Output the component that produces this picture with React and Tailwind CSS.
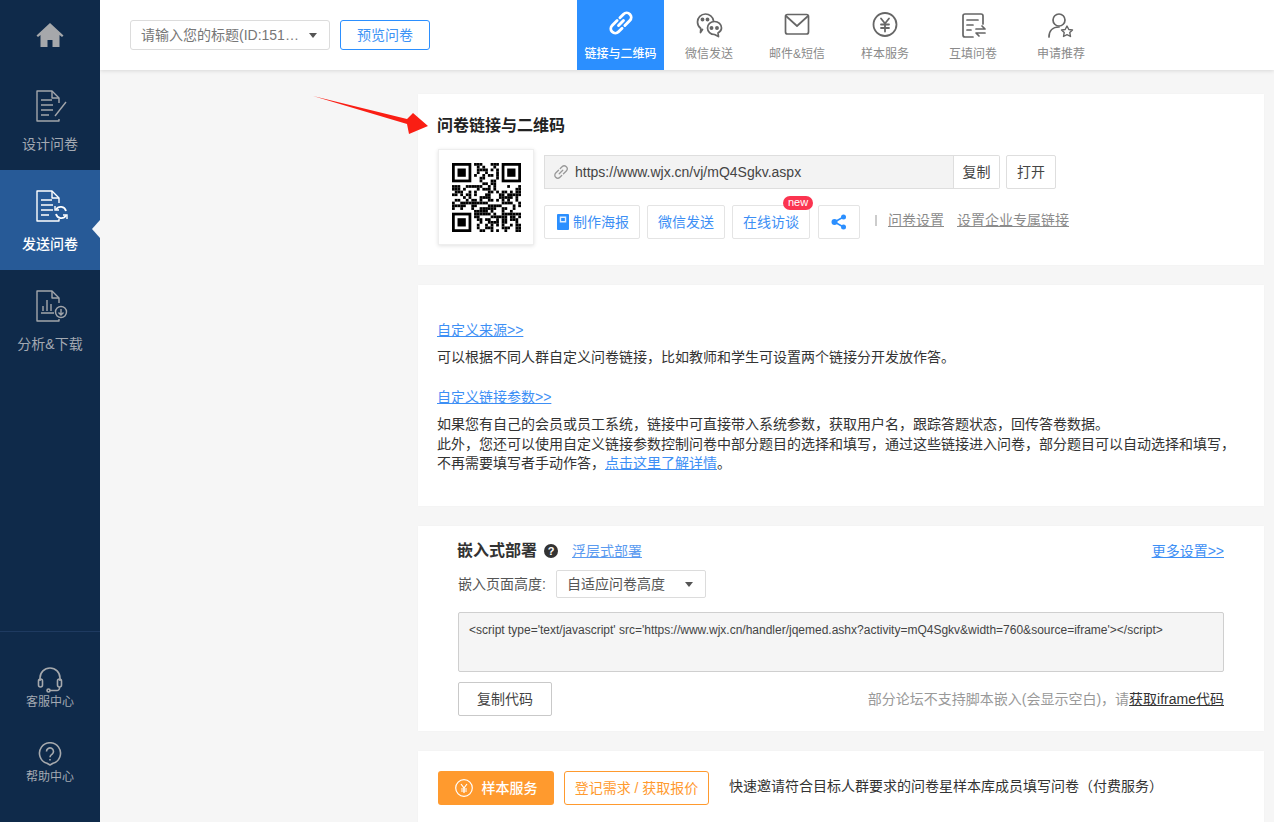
const FONT = "font-['Liberation_Sans','Noto_Sans_CJK_SC',sans-serif]";

// fake qr matrix, fixed seed so it looks the same every run
function qrCells() {
  const n = 25;
  const cells = [];
  let s = 151;
  const finder = (x, y) => x >= 0 && x < 8 && y >= 0 && y < 8;
  for (let y = 0; y < n; y++) {
    for (let x = 0; x < n; x++) {
      if (finder(x, y) || finder(x - n + 8, y) || finder(x, y - n + 8)) continue;
      s = (s * 1103515245 + 12345) & 0x7fffffff;
      if ((s >> 16) % 100 < 52) cells.push([x, y]);
    }
  }
  return cells;
}

function QrCode() {
  const Finder = ({ x, y }) => (
    <g>
      <rect x={x + 0.5} y={y + 0.5} width="6" height="6" fill="none" stroke="#000" strokeWidth="1" />
      <rect x={x + 2} y={y + 2} width="3" height="3" fill="#000" />
    </g>
  );
  return (
    <svg width="69" height="69" viewBox="0 0 25 25">
      {qrCells().map(([x, y]) => (
        <rect key={`${x}-${y}`} x={x} y={y} width="1" height="1" fill="#000" />
      ))}
      <Finder x={0} y={0} />
      <Finder x={18} y={0} />
      <Finder x={0} y={18} />
    </svg>
  );
}

function DocIcon({ color, children }) {
  return (
    <svg width="34" height="34" viewBox="0 0 34 34" fill="none" stroke={color} strokeWidth="1.4">
      <path d="M25 14V9l-7-7H3v30h22v-2" strokeLinejoin="round" />
      <path d="M18 2v7h7" strokeLinejoin="round" />
      {children}
    </svg>
  );
}

function SideItem({ active, icon, label }) {
  return (
    <div className={`relative h-[100px] flex flex-col items-center pt-[19px] ${active ? "bg-[#275a97]" : ""}`}>
      <div className="h-[34px] w-[34px] ml-[1px]">{icon}</div>
      <div className={`mt-[11px] text-[14px] leading-[20px] ${active ? "text-white font-medium" : "text-[#a3a9b2]"}`}>{label}</div>
      {active && (
        <div className="absolute right-0 top-[50px] w-0 h-0 border-y-[9px] border-y-transparent border-r-[8px] border-r-[#f2f5f9]" />
      )}
    </div>
  );
}

function TopTab({ active, icon, label }) {
  return (
    <div className={`h-[70px] flex flex-col items-center pt-[11px] ${active ? "w-[87px] mr-[1px] bg-[#2b8fff] text-white" : "w-[88px] text-[#8a8a8a]"}`}>
      <div className="h-[28px] w-[28px]">{icon}</div>
      <div className={`mt-[7px] text-[12px] leading-[16px] ${active ? "font-medium" : ""}`}>{label}</div>
    </div>
  );
}

const tabStroke = { fill: "none", stroke: "#666", strokeWidth: 1.7, strokeLinecap: "round", strokeLinejoin: "round" };

function BlueBtn({ children, className = "" }) {
  return (
    <div className={`h-[34px] border border-[#e4e4e4] rounded-[2px] flex items-center justify-center text-[14px] text-[#3d8ff5] bg-white ${className}`}>
      {children}
    </div>
  );
}

const cardShadow = "shadow-[0_0_2px_rgba(0,0,0,0.03)]";

export default function App() {
  return (
    <div className={`${FONT} relative flex h-[822px] w-[1274px] overflow-hidden bg-[#f6f6f6] text-[14px] text-[#333]`}>
      {/* SIDEBAR */}
      <aside className="w-[100px] shrink-0 bg-[#0f2a4a] flex flex-col z-20">
        <div className="h-[70px] flex items-center justify-center">
          <svg width="28" height="26" viewBox="0 0 28 26" fill="#a6a8ab">
            <path d="M14 1 0.5 13.5 2 15l2.500-2V25h7v-7h5v7h7V13l2.500 2 1.500-1.500z" />
          </svg>
        </div>
        <SideItem
          label="设计问卷"
          icon={
            <DocIcon color="#a3a6ab">
              <path d="M7 11h11M7 16h12M7 21h12M7 26h8" />
              <path d="M21 27l11-14" />
            </DocIcon>
          }
        />
        <SideItem
          active
          label="发送问卷"
          icon={
            <DocIcon color="#fff">
              <path d="M7 11h11M7 16h12M7 21h12M7 26h8" />
              <path d="M32 22a5.500 5.500 0 0 0-10-1.500M22 25a5.500 5.500 0 0 0 10 1.500" strokeWidth="1.800" />
              <path d="M21 17v4h4M33 30v-4h-4" strokeWidth="1.400" />
            </DocIcon>
          }
        />
        <SideItem
          label="分析&下载"
          icon={
            <DocIcon color="#a3a6ab">
              <path d="M7 24h13M9 22v-5M13 22V11M17 22v-7" />
              <circle cx="27" cy="23" r="5.500" />
              <path d="M27 20v5.500M24.500 23.500l2.500 2.500 2.500-2.500" />
            </DocIcon>
          }
        />
        <div className="mt-auto border-t border-[#1e3a60] h-[191px] flex flex-col items-center pt-[35px] text-[12px] leading-[16px] text-[#a3a9b2]">
          <svg width="26" height="26" viewBox="0 0 26 26" fill="none" stroke="#a6a9ad" strokeWidth="1.600">
            <path d="M3 14v-3a10 10 0 0 1 20 0v3" />
            <rect x="1.500" y="12" width="4" height="8" rx="2" />
            <rect x="20.500" y="12" width="4" height="8" rx="2" />
            <path d="M22.500 20v1a2.500 2.500 0 0 1-2.500 2.500h-7" />
            <circle cx="11.500" cy="23.500" r="1.500" />
          </svg>
          <div className="mt-[1px]">客服中心</div>
          <svg className="mt-[32px]" width="24" height="24" viewBox="0 0 24 24" fill="none" stroke="#a6a9ad" strokeWidth="1.600">
            <path d="M12 23l-3-1.700A10.500 10.500 0 1 1 15 21.300z" strokeLinejoin="round" />
            <path d="M8.500 9.500a3.500 3.500 0 1 1 5.500 2.800c-1.200.9-2 1.400-2 2.900" />
            <path d="M12 17v1.500" />
          </svg>
          <div className="mt-[3px]">帮助中心</div>
        </div>
      </aside>

      <div className="flex-1 flex flex-col min-w-0">
        {/* TOP BAR */}
        <header className="h-[70px] shrink-0 bg-white shadow-[0_1px_4px_rgba(0,0,0,0.12)] flex z-10">
          <div className="w-[477px] flex items-center pl-[30px]">
            <div className="w-[200px] h-[30px] border border-[#dcdcdc] rounded-[3px] flex items-center pl-[10px] pr-[12px] text-[#777]">
              <span className="flex-1 truncate">请输入您的标题(ID:151…</span>
              <span className="w-0 h-0 border-x-[4px] border-x-transparent border-t-[5px] border-t-[#555]" />
            </div>
            <div className="ml-[10px] w-[90px] h-[30px] border border-[#2b8fff] rounded-[3px] flex items-center justify-center text-[#3d93f5]">
              预览问卷
            </div>
          </div>
          <nav className="flex">
            <TopTab
              active
              label="链接与二维码"
              icon={
                <svg width="28" height="28" viewBox="0 0 28 28" fill="none" stroke="#fff" strokeWidth="2.900" strokeLinecap="round">
                  <g transform="rotate(-45 14 12)">
                    <path d="M13 7.500H6a4.500 4.500 0 0 0 0 9h5" />
                    <path d="M15 16.500h7a4.500 4.500 0 0 0 0-9h-5" />
                    <path d="M10.500 12h7" />
                  </g>
                </svg>
              }
            />
            <TopTab
              label="微信发送"
              icon={
                <svg width="28" height="28" viewBox="0 0 28 28" {...tabStroke}>
                  <path d="M7.500 18.500 5.500 21.500l.3-4C3.800 16 2.500 13.800 2.500 11 2.500 6.600 6 3 10.500 3c4 0 7.300 2.800 7.900 6.500" />
                  <path d="M19.500 10.500c-4 0-7 3-7 6.500s3 6.500 7 6.500l4 2-.5-3.500c2.200-1.200 3.500-3 3.500-5 0-3.500-3-6.500-7-6.500z" />
                  <circle cx="7.500" cy="8.500" r="1.100" fill="#666" />
                  <circle cx="12.500" cy="8.500" r="1.100" fill="#666" />
                  <circle cx="16.500" cy="17" r="1.100" fill="#666" />
                  <circle cx="22" cy="17" r="1.100" fill="#666" />
                </svg>
              }
            />
            <TopTab
              label="邮件&短信"
              icon={
                <svg width="28" height="28" viewBox="0 0 28 28" {...tabStroke}>
                  <rect x="2.500" y="3.500" width="23" height="19.500" rx="2" />
                  <path d="M3 5l11 10L25 5" />
                </svg>
              }
            />
            <TopTab
              label="样本服务"
              icon={
                <svg width="28" height="28" viewBox="0 0 28 28" {...tabStroke}>
                  <circle cx="14" cy="13.500" r="11.500" strokeWidth="1.800" />
                  <path d="M10 7.500l4 5 4-5M14 12.500v8M10 13.500h8M10 17h8" strokeWidth="1.800" />
                </svg>
              }
            />
            <TopTab
              label="互填问卷"
              icon={
                <svg width="28" height="28" viewBox="0 0 28 28" {...tabStroke}>
                  <path d="M24 13V5a2 2 0 0 0-2-2H6a2 2 0 0 0-2 2v19a2 2 0 0 0 2 2h8" />
                  <path d="M8 9h11M8 14h6M8 19h4" />
                  <path d="M17 18h9l-3-3M26 22h-9l3 3" />
                </svg>
              }
            />
            <TopTab
              label="申请推荐"
              icon={
                <svg width="28" height="28" viewBox="0 0 28 28" {...tabStroke}>
                  <circle cx="12" cy="9" r="6" />
                  <path d="M2 26c0-6 3.500-10 10-10" />
                  <path d="M20 15l1.800 3.500 3.700.5-2.700 2.600.7 3.900-3.500-1.800-3.500 1.800.7-3.900-2.700-2.600 3.700-.5z" strokeWidth="1.400" />
                </svg>
              }
            />
          </nav>
        </header>

        {/* MAIN */}
        <main className="pl-[318px] pr-[10px] pt-[24px] flex flex-col gap-[20px]">
          {/* Link card */}
          <section className={`h-[171px] bg-white ${cardShadow} pl-[20px] pt-[20px]`}>
            <h2 className="ml-[-1px] text-[16px] leading-[24px] font-bold text-[#222]">问卷链接与二维码</h2>
            <div className="flex mt-[11px]">
              <div className="w-[96px] h-[96px] border border-[#eee] shadow-[0_1px_4px_rgba(0,0,0,0.12)] flex items-center justify-center">
                <QrCode />
              </div>
              <div className="ml-[10px] pt-[6px]">
                <div className="flex">
                  <div className="w-[410px] h-[34px] bg-[#f3f3f3] border border-[#dedede] flex items-center pl-[8px] text-[#444]">
                    <svg width="16" height="16" viewBox="0 0 16 16" fill="none" stroke="#999" strokeWidth="1.300" strokeLinecap="round">
                      <g transform="rotate(-45 8 8)">
                        <path d="M7.500 5H3.500a3 3 0 0 0 0 6H6" />
                        <path d="M8.500 11h4a3 3 0 0 0 0-6H10" />
                        <path d="M5.500 8h5" />
                      </g>
                    </svg>
                    <span className="ml-[6px]">https://www.wjx.cn/vj/mQ4Sgkv.aspx</span>
                  </div>
                  <div className="w-[46px] h-[34px] border border-[#dedede] border-l-0 rounded-r-[2px] flex items-center justify-center text-[#444]">复制</div>
                  <div className="ml-[6px] w-[50px] h-[34px] border border-[#dedede] rounded-[2px] flex items-center justify-center text-[#444]">打开</div>
                </div>
                <div className="flex items-center mt-[16px]">
                  <BlueBtn className="w-[96px] pl-[2px]">
                    <svg width="12" height="16" viewBox="0 0 13 16" preserveAspectRatio="none" className="mr-[4px]">
                      <path d="M1 0h11a1 1 0 0 1 1 1v14a1 1 0 0 1-1 1H1a1 1 0 0 1-1-1V1a1 1 0 0 1 1-1z" fill="#2b8fff" />
                      <rect x="3" y="2.500" width="7" height="6" fill="#fff" opacity="0.85" />
                      <rect x="4.500" y="4" width="4" height="3" fill="#2b8fff" />
                    </svg>
                    制作海报
                  </BlueBtn>
                  <BlueBtn className="ml-[7px] w-[78px]">微信发送</BlueBtn>
                  <BlueBtn className="relative ml-[7px] w-[78px]">
                    在线访谈
                    <span className="absolute right-[-4px] top-[-10px] h-[14px] w-[30px] rounded-[7px] bg-[#fb3450] text-white text-[11px] leading-[13px] text-center">new</span>
                  </BlueBtn>
                  <BlueBtn className="ml-[8px] w-[42px]">
                    <svg width="16" height="16" viewBox="0 0 16 16" fill="#2b8fff">
                      <circle cx="3.500" cy="8" r="3" />
                      <circle cx="12.500" cy="3" r="2.500" />
                      <circle cx="12.500" cy="13" r="2.500" />
                      <path d="M3.500 8l9-5M3.500 8l9 5" stroke="#2b8fff" strokeWidth="1.500" />
                    </svg>
                  </BlueBtn>
                  <span className="ml-[15px] mb-[4px] w-[2px] h-[11px] bg-[#ccc]" />
                  <a className="ml-[11px] mb-[4px] underline text-[#8b8b8b]">问卷设置</a>
                  <a className="ml-[13px] mb-[4px] underline text-[#8b8b8b]">设置企业专属链接</a>
                </div>
              </div>
            </div>
          </section>

          {/* Custom link card */}
          <section className={`h-[221px] bg-white ${cardShadow} pl-[19px] pt-[35px] leading-[20px] text-[#333]`}>
            <a className="underline text-[#3d8ff5]">自定义来源&gt;&gt;</a>
            <p className="mt-[7px]">可以根据不同人群自定义问卷链接，比如教师和学生可设置两个链接分开发放作答。</p>
            <a className="block mt-[20px] underline text-[#3d8ff5]">自定义链接参数&gt;&gt;</a>
            <p className="mt-[7px]">如果您有自己的会员或员工系统，链接中可直接带入系统参数，获取用户名，跟踪答题状态，回传答卷数据。</p>
            <p>此外，您还可以使用自定义链接参数控制问卷中部分题目的选择和填写，通过这些链接进入问卷，部分题目可以自动选择和填写，</p>
            <p className="mt-[-1px]">不再需要填写者手动作答，<a className="underline text-[#3d8ff5]">点击这里了解详情</a>。</p>
          </section>

          {/* Embed card */}
          <section className={`h-[205px] bg-white ${cardShadow} pl-[40px] pr-[40px] pt-[15px]`}>
            <div className="flex items-center h-[20px]">
              <h2 className="ml-[-1px] text-[16px] font-bold text-[#333]">嵌入式部署</h2>
              <span className="ml-[7px] w-[14px] h-[14px] rounded-full bg-[#333] text-white text-[11px] leading-[14px] text-center font-bold">?</span>
              <a className="ml-[14px] underline text-[#5b9bf0]">浮层式部署</a>
              <a className="ml-auto underline text-[#3d8ff5]">更多设置&gt;&gt;</a>
            </div>
            <div className="flex items-center mt-[9px]">
              <span className="text-[#555]">嵌入页面高度:</span>
              <div className="ml-[10px] w-[150px] h-[28px] border border-[#dcdcdc] rounded-[2px] flex items-center pl-[10px] pr-[12px] text-[#555]">
                <span className="flex-1">自适应问卷高度</span>
                <span className="w-0 h-0 border-x-[4px] border-x-transparent border-t-[5px] border-t-[#555]" />
              </div>
            </div>
            <div className="mt-[14px] h-[60px] bg-[#f5f5f5] border border-[#cfcfcf] rounded-[2px] px-[10px] pt-[9px] text-[12px] leading-[16px] text-[#444]">
              {"<script type='text/javascript' src='https://www.wjx.cn/handler/jqemed.ashx?activity=mQ4Sgkv&width=760&source=iframe'></script>"}
            </div>
            <div className="flex items-center mt-[10px]">
              <div className="w-[94px] h-[34px] border border-[#c9c9c9] rounded-[2px] flex items-center justify-center text-[#444]">复制代码</div>
              <span className="ml-auto text-[#999]">
                部分论坛不支持脚本嵌入(会显示空白)，请<a className="underline text-[#333]">获取iframe代码</a>
              </span>
            </div>
          </section>

          {/* Sample service card */}
          <section className={`h-[100px] shrink-0 bg-white ${cardShadow} pl-[20px] pt-[20px]`}>
            <div className="flex items-center">
              <div className="w-[116px] h-[34px] rounded-[3px] bg-[#ff9a2e] flex items-center justify-center text-white font-medium">
                <svg width="18" height="18" viewBox="0 0 18 18" fill="none" stroke="#fff" strokeWidth="1.200">
                  <circle cx="9" cy="9" r="8.300" />
                  <path d="M6 5l3 4 3-4M9 9v5M6 10h6M6 12h6" />
                </svg>
                <span className="ml-[9px]">样本服务</span>
              </div>
              <div className="ml-[10px] w-[145px] h-[34px] rounded-[3px] border border-[#ff9a2e] flex items-center justify-center text-[#ff9a2e]">登记需求 / 获取报价</div>
              <span className="ml-[20px] mb-[3px] text-[#333]">快速邀请符合目标人群要求的问卷星样本库成员填写问卷（付费服务）</span>
            </div>
          </section>
        </main>
      </div>

      {/* red annotation arrow on top of the screenshot */}
      <svg className="absolute left-[310px] top-[92px] z-30" width="120" height="44" viewBox="0 0 120 44">
        <path d="M3 4 L97 27 L103 21 L118 34 L99 42 L97 32 Z" fill="#fa1e14" />
      </svg>
    </div>
  );
}
